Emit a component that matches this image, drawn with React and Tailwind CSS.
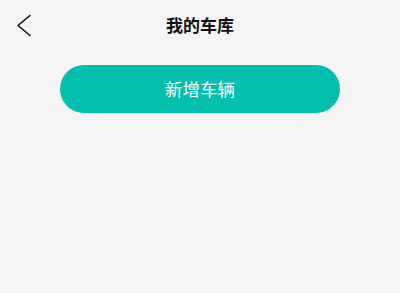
import React from 'react';

export default function App() {
  return (
    <div
      className="w-[400px] h-[293px] bg-[#f4f4f4] overflow-hidden"
      style={{ fontFamily: '"Noto Sans CJK SC", "Noto Sans", sans-serif' }}
    >
      {/* Header */}
      <div className="relative h-[50px] flex items-center justify-center">
        <button className="absolute left-[15px] top-[13px] w-[18px] h-[25px] flex items-center justify-center">
          <svg width="18" height="25" viewBox="0 0 18 25" fill="none">
            <path d="M15 2.5 L3 12.5 L15 22.5" stroke="#111" strokeWidth="1.6" strokeLinecap="round" strokeLinejoin="round" />
          </svg>
        </button>
        <h1 className="text-[17px] font-bold text-[#111] leading-none -mt-[1px]">我的车库</h1>
      </div>

      {/* Add vehicle */}
      <div className="flex justify-center mt-[15px]">
        <button className="w-[280px] h-[48px] rounded-full bg-[#03c0ae] text-white text-[17.5px] leading-none">
          新增车辆
        </button>
      </div>
    </div>
  );
}
